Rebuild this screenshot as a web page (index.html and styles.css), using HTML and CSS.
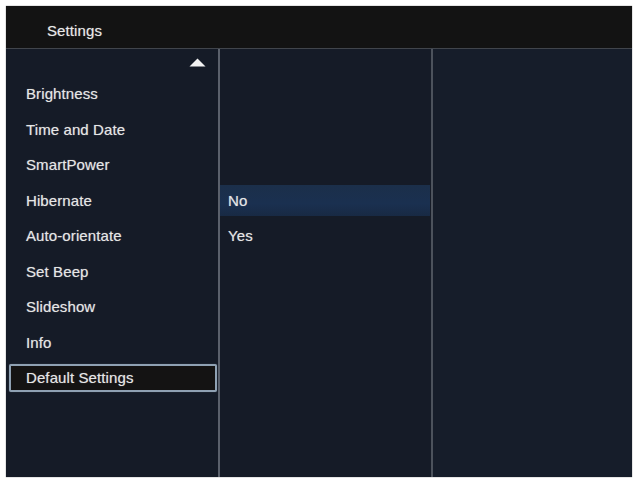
FILE: index.html
```html
<!DOCTYPE html>
<html lang="en">
<head>
<meta charset="utf-8">
<title>Settings</title>
<link rel="stylesheet" href="styles.css">
</head>
<body>
<div class="screen">
  <header class="title-bar">
    <span class="title">Settings</span>
  </header>
  <div class="panes">
    <nav class="pane menu-pane">
      <div class="scroll-up">
        <svg width="17" height="9" viewBox="0 0 17 9"><path d="M8.5 0.5 L16.5 8.5 L0.5 8.5 Z" fill="#f2f2f2"/></svg>
      </div>
      <ul class="menu">
        <li class="menu-item">Brightness</li>
        <li class="menu-item">Time and Date</li>
        <li class="menu-item">SmartPower</li>
        <li class="menu-item">Hibernate</li>
        <li class="menu-item">Auto-orientate</li>
        <li class="menu-item">Set Beep</li>
        <li class="menu-item">Slideshow</li>
        <li class="menu-item">Info</li>
        <li class="menu-item is-focused"><span class="focus-box">Default Settings</span></li>
      </ul>
    </nav>
    <section class="pane option-pane">
      <ul class="options">
        <li class="option is-selected"><span class="option-fill">No</span></li>
        <li class="option"><span class="option-fill">Yes</span></li>
      </ul>
    </section>
    <section class="pane detail-pane"></section>
  </div>
</div>
</body>
</html>
```

FILE: styles.css
```css
html, body {
  margin: 0;
  padding: 0;
  background: #ffffff;
}

body {
  font-family: "Liberation Sans", Arial, sans-serif;
  padding: 6px 5px 7px 6px;
}

.screen {
  width: 626px;
  height: 471px;
  background: #151b27;
  display: flex;
  flex-direction: column;
  box-shadow: 0 0 1px rgba(0, 0, 0, 0.6);
}

.title-bar {
  height: 42px;
  flex: none;
  background: #131313;
  display: flex;
  align-items: center;
  padding-left: 41px;
  border-bottom: 1px solid #41454c;
}

.title {
  color: #e8e8e8;
  font-size: 15px;
  letter-spacing: 0.1px;
  text-shadow: 0 0 1px rgba(255, 255, 255, 0.45);
  position: relative;
  top: 3px;
}

.panes {
  flex: 1;
  display: grid;
  grid-template-columns: 214px 213px 1fr;
  min-height: 0;
}

.pane {
  min-height: 0;
}

.menu-pane {
  border-right: 2px solid #5b616c;
  display: flex;
  flex-direction: column;
}

.option-pane {
  border-right: 2px solid #4c525c;
}

.detail-pane {
  background: #161d2a;
}

.scroll-up {
  height: 27px;
  display: flex;
  justify-content: flex-end;
  align-items: center;
  padding-right: 12px;
  filter: blur(0.4px);
}

.menu,
.options {
  list-style: none;
  margin: 0;
  padding: 0;
}

.menu-item {
  height: 35.5px;
  display: flex;
  align-items: center;
  padding-left: 20px;
  color: #e6e6e6;
  font-size: 15px;
  letter-spacing: 0.1px;
  text-shadow: 0 0 1px rgba(255, 255, 255, 0.45);
}

.menu-item.is-focused {
  padding-left: 3px;
  padding-right: 1px;
}

.focus-box {
  flex: 1;
  height: 24px;
  display: flex;
  align-items: center;
  padding-left: 15px;
  background: #141313;
  border: 2px solid #8fa1b3;
  border-radius: 2px;
  box-shadow: 0 0 1px rgba(143, 161, 179, 0.6);
}

.options {
  padding-top: 133.5px;
}

.option {
  height: 35.5px;
  display: flex;
  align-items: center;
  color: #e6e6e6;
  font-size: 15px;
  letter-spacing: 0.1px;
  text-shadow: 0 0 1px rgba(255, 255, 255, 0.45);
}

.option-fill {
  flex: 1;
  height: 31px;
  display: flex;
  align-items: center;
  padding-left: 8px;
  margin-right: 1px;
}

.option.is-selected .option-fill {
  background: linear-gradient(#1b2f4a, #1a3050 60%, #182a44);
}
```
